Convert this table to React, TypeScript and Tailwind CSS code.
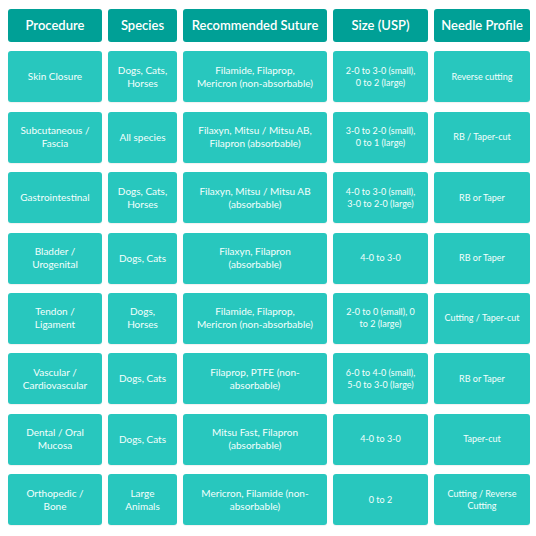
import React from "react";

type Row = string[][];

const headers = ["Procedure", "Species", "Recommended Suture", "Size (USP)", "Needle Profile"];

const rows: Row[] = [
  [["Skin Closure"], ["Dogs, Cats,", "Horses"], ["Filamide, Filaprop,", "Mericron (non-absorbable)"], ["2-0 to 3-0 (small),", "0 to 2 (large)"], ["Reverse cutting"]],
  [["Subcutaneous /", "Fascia"], ["All species"], ["Filaxyn, Mitsu / Mitsu AB,", "Filapron (absorbable)"], ["3-0 to 2-0 (small),", "0 to 1 (large)"], ["RB / Taper-cut"]],
  [["Gastrointestinal"], ["Dogs, Cats,", "Horses"], ["Filaxyn, Mitsu / Mitsu AB", "(absorbable)"], ["4-0 to 3-0 (small),", "3-0 to 2-0 (large)"], ["RB or Taper"]],
  [["Bladder /", "Urogenital"], ["Dogs, Cats"], ["Filaxyn, Filapron", "(absorbable)"], ["4-0 to 3-0"], ["RB or Taper"]],
  [["Tendon /", "Ligament"], ["Dogs,", "Horses"], ["Filamide, Filaprop,", "Mericron (non-absorbable)"], ["2-0 to 0 (small), 0", "to 2 (large)"], ["Cutting / Taper-cut"]],
  [["Vascular /", "Cardiovascular"], ["Dogs, Cats"], ["Filaprop, PTFE (non-", "absorbable)"], ["6-0 to 4-0 (small),", "5-0 to 3-0 (large)"], ["RB or Taper"]],
  [["Dental / Oral", "Mucosa"], ["Dogs, Cats"], ["Mitsu Fast, Filapron", "(absorbable)"], ["4-0 to 3-0"], ["Taper-cut"]],
  [["Orthopedic /", "Bone"], ["Large", "Animals"], ["Mericron, Filamide (non-", "absorbable)"], ["0 to 2"], ["Cutting / Reverse", "Cutting"]],
];

// size + needle columns use a smaller font
const small = [false, false, false, true, true];

const Cell = ({ lines, sm }: { lines: string[]; sm: boolean }) => (
  <div
    className={`flex h-[51px] items-center justify-center rounded-[3px] bg-[#28c7be] text-center text-[#f4fffd] shadow-[0_1px_1px_rgba(0,0,0,0.06)] ${
      sm ? "text-[9px] leading-[12px]" : "text-[10px] leading-[13px]"
    }`}
  >
    <div>
      {lines.map((l, i) => (
        <div key={i}>{l}</div>
      ))}
    </div>
  </div>
);

export default function App() {
  return (
    <div
      className="h-[536px] w-[536px] bg-white px-[8px] pt-[9px]"
      style={{ fontFamily: "Lato, 'Noto Sans', sans-serif" }}
    >
      <div className="grid grid-cols-[94px_69px_144px_95px_96px] gap-x-[6px] gap-y-[9.4px]">
        {headers.map((h) => (
          <div
            key={h}
            className="flex h-[33px] items-center justify-center rounded-[3px] bg-[#00a096] text-[13px] font-semibold text-white"
          >
            {h}
          </div>
        ))}
        {rows.map((r, ri) =>
          r.map((c, ci) => <Cell key={`${ri}-${ci}`} lines={c} sm={small[ci]} />)
        )}
      </div>
    </div>
  );
}
